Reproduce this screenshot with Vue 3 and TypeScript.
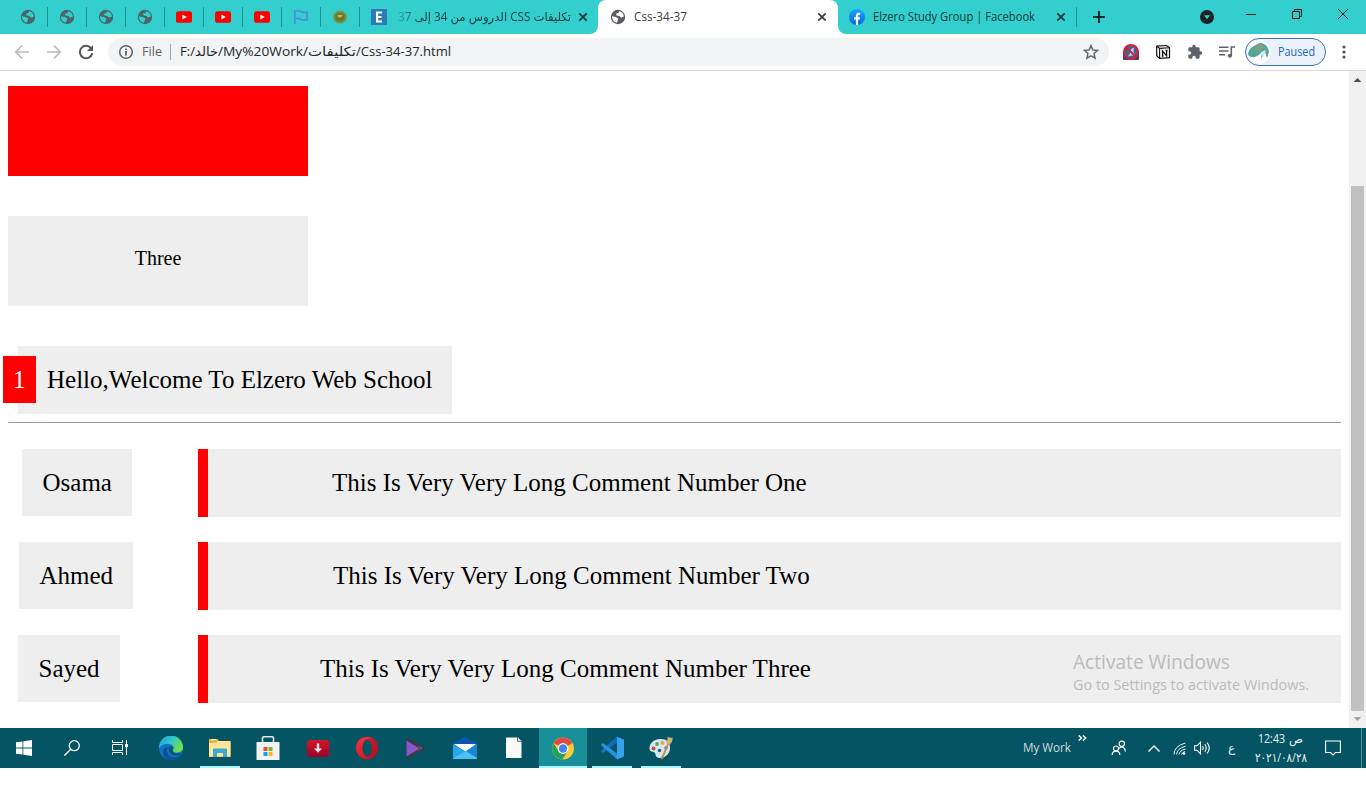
<script setup lang="ts">
import { h } from 'vue'

interface LabelProps {
  text: string
  width: number
  size: number
  rtl?: boolean
  override?: boolean
}

// Interface label stretched to an exact width
const Label = (p: LabelProps) => {
  const height = Math.ceil(p.size * 1.5)
  return h('svg', { width: p.width, height, class: 'label' }, [
    h(
      'text',
      {
        x: p.rtl ? p.width : 0,
        y: Math.round(p.size * 1.1),
        'font-size': p.size,
        textLength: p.width,
        lengthAdjust: 'spacingAndGlyphs',
        direction: p.rtl ? 'rtl' : 'ltr',
        style: p.override ? 'unicode-bidi: bidi-override' : undefined,
        fill: 'currentColor',
      },
      p.text,
    ),
  ])
}
Label.props = { text: String, width: Number, size: Number, rtl: Boolean, override: Boolean }

const pinned: string[] = ['globe', 'globe', 'globe', 'globe', 'yt', 'yt', 'yt', 'flag', 'moss']

const urlParts = [
  { text: 'F:/', width: 15, size: 12.7, rtl: false },
  { text: 'خالد', width: 23, size: 12.7, rtl: true },
  { text: '/My%20Work/', width: 90, size: 12.7, rtl: false },
  { text: 'تكليفات', width: 48, size: 12.7, rtl: true },
  { text: '/Css-34-37.html', width: 95, size: 12.7, rtl: false },
]

const comments = [
  { name: 'Osama', text: 'This Is Very Very Long Comment Number One', key: 'one' },
  { name: 'Ahmed', text: 'This Is Very Very Long Comment Number Two', key: 'two' },
  { name: 'Sayed', text: 'This Is Very Very Long Comment Number Three', key: 'three' },
]

const apps = [
  { id: 'edge', state: '' },
  { id: 'files', state: 'open' },
  { id: 'store', state: '' },
  { id: 'down', state: '' },
  { id: 'opera', state: '' },
  { id: 'player', state: '' },
  { id: 'mail', state: '' },
  { id: 'doc', state: '' },
  { id: 'chrome', state: 'active' },
  { id: 'code', state: 'open' },
  { id: 'paint', state: 'open' },
]
</script>

<template>
  <div class="screen">
    <svg width="0" height="0" class="defs">
      <defs>
        <symbol id="globe" viewBox="0 0 16 16">
          <circle cx="8" cy="8" r="7.2" fill="currentColor" />
          <path d="M9.2 2.2 L8.4 4 L6.2 4.6 L6.4 6.4 L9.6 6.9 L11 8.8 L13.9 7.6 A6 6 0 0 0 9.2 2.2Z M2 7.2 L5.6 8 L8.3 9.2 L7.9 11 L6.9 13.8 A6 6 0 0 1 2 7.2Z" fill="var(--hole)" />
        </symbol>
        <symbol id="close" viewBox="0 0 10 10">
          <path d="M1.3 1.3L8.7 8.7M8.7 1.3L1.3 8.7" stroke="currentColor" stroke-width="1.8" />
        </symbol>
        <linearGradient id="gEdge" x1="0" y1="0" x2="1" y2="0.5">
          <stop offset="0" stop-color="#1c9fe2" /><stop offset=".55" stop-color="#35c4c9" /><stop offset="1" stop-color="#6fe04b" />
        </linearGradient>
        <linearGradient id="gOpera" x1="0" y1="0" x2="1" y2="1">
          <stop offset="0" stop-color="#ff3440" /><stop offset="1" stop-color="#b80a1c" />
        </linearGradient>
        <linearGradient id="gRed" x1="0" y1="0" x2="0" y2="1">
          <stop offset="0" stop-color="#d31627" /><stop offset="1" stop-color="#97062b" />
        </linearGradient>
        <linearGradient id="gFb" x1="0" y1="0" x2="0" y2="1">
          <stop offset="0" stop-color="#19a8fb" /><stop offset="1" stop-color="#0866e4" />
        </linearGradient>
        <radialGradient id="gMoss">
          <stop offset="0" stop-color="#a8a23a" /><stop offset=".5" stop-color="#6a7a28" /><stop offset=".8" stop-color="#6b9a52" /><stop offset="1" stop-color="#6b9a52" stop-opacity="0.1" />
        </radialGradient>
      </defs>
    </svg>

    <header class="tabs">
      <div v-for="(p, i) in pinned" :key="i" class="pin">
        <svg v-if="p === 'globe'" width="16" height="16" class="dim"><use href="#globe" /></svg>
        <svg v-else-if="p === 'yt'" width="16" height="16" viewBox="0 0 16 16">
          <rect y="2.3" width="16" height="11.5" rx="2.6" fill="#f00" /><path d="M6.4 5.6L10.8 8L6.4 10.4Z" fill="#fff" />
        </svg>
        <svg v-else-if="p === 'flag'" width="16" height="16" viewBox="0 0 16 16" fill="none" stroke="#4a8fd6" stroke-width="1.7">
          <path d="M1.8 15V2H7.2L9 3.3H14V10.8H8.8L7 9.7H2" />
        </svg>
        <svg v-else width="16" height="16" viewBox="0 0 16 16">
          <ellipse cx="8" cy="8" rx="7.8" ry="7" fill="url(#gMoss)" />
          <path d="M3.5 6.2Q8 3 12.500 6.2L10.5 10.5Q8 13 5.5 10.5Z" fill="#6b7522" /><path d="M5 6.5Q8 5 11 6.5L9 8.5H6.5Z" fill="#c0b463" />
        </svg>
      </div>

      <div class="tab first">
        <svg width="16" height="16" viewBox="0 0 16 16"><rect width="16" height="16" fill="#2c7bb8" /><path d="M5 2.500H11V4.500H7.2V6.9H10.5V8.9H7.2V11.500H11V13.500H5Z" fill="#fff" /></svg>
        <Label class="fade" text="تكليفات CSS الدروس من 34 إلى 37" :width="173" :size="12" rtl />
        <svg width="10" height="10"><use href="#close" /></svg>
      </div>
      <div class="tab current">
        <svg width="16" height="16" class="grey"><use href="#globe" /></svg>
        <Label text="Css-34-37" :width="53" :size="12" />
        <svg width="10" height="10" class="end"><use href="#close" /></svg>
      </div>
      <div class="tab last">
        <svg width="16" height="16" viewBox="0 0 16 16">
          <circle cx="8" cy="8" r="8" fill="url(#gFb)" /><path d="M6.9 16V10.4H5V8.2H6.9V6.5Q6.9 3.8 9.6 3.8L11.2 3.9V5.8H10.1Q9.1 5.8 9.1 6.8V8.2H11.1L10.7 10.4H9.1V16Z" fill="#fff" />
        </svg>
        <Label text="Elzero Study Group | Facebook" :width="162" :size="12" />
        <svg width="10" height="10" class="end"><use href="#close" /></svg>
        <i class="divider"></i>
      </div>
      <svg class="plus" width="12" height="12" viewBox="0 0 12 12"><path d="M6 0V12M0 6H12" stroke="#14282b" stroke-width="2" /></svg>
      <div class="winctl">
        <svg width="14" height="14" viewBox="0 0 14 14" class="drop"><circle cx="7" cy="7" r="7" fill="#1f2124" /><path d="M4 5.3H10L7 9.3Z" fill="#33cfcf" /></svg>
        <svg width="10" height="10" viewBox="0 0 10 10"><path d="M0 5.5H10" stroke="#0b1a1a" /></svg>
        <svg width="10" height="10" viewBox="0 0 10 10" fill="none" stroke="#0b1a1a"><path d="M.5 2.5H7.5V9.5H.5ZM2.5 2.5V.5H9.5V7.5H7.5" /></svg>
        <svg width="10" height="10" viewBox="0 0 10 10"><path d="M0 0L10 10M10 0L0 10" stroke="#0b1a1a" /></svg>
      </div>
    </header>

    <nav class="toolbar">
      <svg class="nav" width="16" height="16" viewBox="0 0 16 16" fill="none" stroke="#babcbe" stroke-width="1.7"><path d="M15 8H2M8 1.7L1.7 8L8 14.3" /></svg>
      <svg class="nav" width="16" height="16" viewBox="0 0 16 16" fill="none" stroke="#babcbe" stroke-width="1.7"><path d="M1 8H14M8 1.7L14.3 8L8 14.3" /></svg>
      <svg class="nav" width="16" height="16" viewBox="0 0 16 16"><path d="M13.3 4.6A6.2 6.2 0 1 0 14.2 9.2" fill="none" stroke="#54575b" stroke-width="2" /><path d="M15 1V7H9Z" fill="#54575b" /></svg>
      <div class="omni">
        <svg width="16" height="16" viewBox="0 0 16 16"><circle cx="8" cy="8" r="6.3" fill="none" stroke="#5f6368" stroke-width="1.5" /><path d="M7.2 7H8.8V11.5H7.2ZM7.2 4.4H8.8V6H7.2Z" fill="#4f5357" /></svg>
        <Label class="scheme" text="File" :width="20" :size="12.7" />
        <i class="bar"></i>
        <div class="url"><Label v-for="part in urlParts" :key="part.text" v-bind="part" /></div>
        <svg class="star" width="16" height="16" viewBox="0 0 16 16" fill="none" stroke="#5f6368" stroke-width="1.4"><path d="M8 1.6L9.9 6L14.6 6.4L11 9.5L12.1 14.2L8 11.7L3.9 14.2L5 9.5L1.4 6.4L6.1 6Z" /></svg>
      </div>
      <svg class="ext" width="16" height="16" viewBox="0 0 16 16"><path d="M0 8H16V15Q16 16 15 16H1Q0 16 0 15Z" fill="#3a4672" /><circle cx="8" cy="8" r="7" fill="#41639b" stroke="#d3212f" stroke-width="2" /><path d="M8 5L11 3.5L10.500 8L12 11L5 12.500L7 9.500Z" fill="#b9cbe6" /><path d="M3 3L13 13" stroke="#d3212f" stroke-width="2" /></svg>
      <svg class="ext" width="16" height="16" viewBox="0 0 16 16"><path d="M1.7 2.200L11.6 1.500L14.500 3.600V13.700L4.600 14.400L1.700 11.800Z" fill="#fff" stroke="#111" stroke-width="1.200" /><path d="M1.900 2.300L4.600 4.400L14.500 3.700M4.600 4.400V14.400" stroke="#111" stroke-width="1.100" fill="none" /><path d="M7.600 12.200V7L11.600 11.800V6.500M6.700 6.900H8.200M10.600 6.400H12.600M6.700 12.200H8.500" stroke="#111" stroke-width="1.300" fill="none" /></svg>
      <svg class="ext" width="16" height="16" viewBox="0 0 24 24"><path fill="#5f6368" d="M20.5 11H19V7c0-1.1-.9-2-2-2h-4V3.500a2.500 2.500 0 0 0-5 0V5H4c-1.100 0-2 .9-2 2v3.800h1.500a2.700 2.700 0 0 1 0 5.400H2V20c0 1.100.9 2 2 2h3.800v-1.500a2.700 2.700 0 0 1 5.400 0V22H17c1.100 0 2-.9 2-2v-4h1.500a2.500 2.500 0 0 0 0-5z" /></svg>
      <svg class="ext" width="16" height="16" viewBox="0 0 16 16" fill="none" stroke="#5f6368" stroke-width="1.6"><path d="M0 3.300H9.500M0 7H9.500M0 10.700H6M12.300 12V3H16" /><circle cx="10.900" cy="11.800" r="2" fill="#5f6368" stroke="none" /></svg>
      <div class="profile">
        <svg width="24" height="24" viewBox="0 0 24 24"><circle cx="12" cy="12" r="11.500" fill="#fff" /><path d="M1 13Q3 7 9 5Q13 1.500 17 4Q21 6 22 12L20 18L18 12L14 19L15 12Q10 18 5 17Q1 17 1 13Z" fill="#57a596" /><path d="M8 6Q14 3 18 6L13 11L8 10Z" fill="#7f9e82" /><path d="M14 12L19 10L16 18Z" fill="#d5e8e5" /></svg>
        <Label text="Paused" :width="37" :size="12.300" />
      </div>
      <svg class="dots" width="4" height="14" viewBox="0 0 4 14" fill="#505357"><circle cx="2" cy="2" r="1.600" /><circle cx="2" cy="7" r="1.600" /><circle cx="2" cy="12" r="1.600" /></svg>
    </nav>

    <div class="viewport">
      <main class="page">
        <div class="box red"></div>
        <div class="box">Three</div>
        <div class="hello"><span class="badge">1</span>Hello,Welcome To Elzero Web School</div>
        <div class="rule"></div>
        <div v-for="c in comments" :key="c.key" class="row" :class="c.key">
          <div class="who"><span class="name">{{ c.name }}</span></div>
          <p class="comment">{{ c.text }}</p>
        </div>
      </main>
      <aside class="scroll">
        <svg width="17" height="17"><path d="M4.500 11L8.500 7L12.500 11Z" fill="#505050" /></svg>
        <div class="thumb"></div>
        <svg width="17" height="17"><path d="M4.500 6L8.500 10L12.500 6Z" fill="#a3a3a3" /></svg>
      </aside>
      <div class="watermark">
        <Label text="Activate Windows" :width="157" :size="19.500" />
        <Label text="Go to Settings to activate Windows." :width="236" :size="14.800" />
      </div>
    </div>

    <footer class="taskbar">
      <div class="sys"><svg width="16" height="16" viewBox="0 0 16 16" fill="#fff"><path d="M0 2.300L6.500 1.400V7.500H0ZM7.300 1.300L16 0V7.500H7.300ZM0 8.400H6.500V14.600L0 13.700ZM7.300 8.400H16V16L7.300 14.700Z" /></svg></div>
      <div class="sys"><svg width="16" height="16" viewBox="0 0 16 16" fill="none" stroke="#fff" stroke-width="1.300"><circle cx="10.300" cy="5.700" r="5" /><path d="M6.700 9.300L.4 15.600" /></svg></div>
      <div class="sys"><svg width="16" height="16" viewBox="0 0 16 16" fill="none" stroke="#fff"><path d="M.5 0V2.500H10.500V0M.5 15V12.500H10.500V15M.5 4.500H10.500V10.500H.5ZM14.500 0V15" /><path d="M13 4H16V7H13Z" fill="#fff" stroke="none" /></svg></div>
      <div class="apps">
        <div v-for="a in apps" :key="a.id" class="app" :class="[a.state, a.id]">
          <svg width="24" height="24" viewBox="0 0 24 24">
            <g v-if="a.id === 'edge'">
              <circle cx="12" cy="12" r="12" fill="#1272c8" />
              <path d="M0 12A12 12 0 0 1 24 11Q24.500 16 18 16.500Q13.500 16.500 14 14Q15.500 12 14 10Q11 7 6 8Q2 9 0 12Z" fill="url(#gEdge)" />
              <path d="M8.500 11Q6.500 19 14 21.500Q19 22 22.500 17.500Q20 24 12 24Q3.500 23 4 15Q4.500 11.500 8.500 11Z" fill="#0d4f98" />
              <path d="M9.500 11.500Q12 9 14 11.500Q14 13.500 13.500 15Q14.500 17.500 19 17.500L22.500 16.500Q20 20 16 20Q10 19 9.500 11.500Z" fill="#075a70" />
            </g>
            <g v-else-if="a.id === 'files'">
              <path d="M1 3H9.500L11 5H22.500V21H1Z" fill="#e9b83c" /><path d="M1 7H8L10 5H22.500V20.500H1Z" fill="#ffe598" /><path d="M3.500 3H8V4H3.500Z" fill="#fff" /><path d="M5 21V13.500Q5 12.500 6 12.500H18Q19 12.500 19 13.500V21H15V17H9V21Z" fill="#39a8d8" />
            </g>
            <g v-else-if="a.id === 'store'">
              <path d="M6.500 7V2Q6.500 .8 7.700 .8H16.300Q17.500 .8 17.500 2V7" fill="none" stroke="#e4e7e9" stroke-width="1.600" /><path d="M.5 6H23.500V24H.5Z" fill="#f1f2f3" /><path d="M7.500 11H11.500V15H7.500Z" fill="#e8502b" /><path d="M12.500 11H16.500V15H12.500Z" fill="#7cb62f" /><path d="M7.500 16H11.500V20H7.500Z" fill="#13a3e4" /><path d="M12.500 16H16.500V20H12.500Z" fill="#f7b71d" />
            </g>
            <g v-else-if="a.id === 'down'">
              <rect x=".8" y="4" width="22.500" height="17" rx="3.500" fill="url(#gRed)" /><path d="M10.800 7.500H13.200V12.500H16L12 16.800L8 12.500H10.800Z" fill="#f1dfe0" />
            </g>
            <g v-else-if="a.id === 'opera'">
              <path fill-rule="evenodd" d="M12 .8A11 11.300 0 1 0 12 23.400A11 11.300 0 1 0 12 .8ZM12.300 3.700C15 3.700 17 7.500 17 12.100S15 20.500 12.300 20.500S7.500 16.700 7.500 12.100S9.600 3.700 12.300 3.700Z" fill="url(#gOpera)" /><path d="M12 3.500Q15.500 1 19 3.800Q23 7 23 12T19 20.400Q15.500 23 12 20.700Q17 19.500 17 12T12 3.500Z" fill="#a70d1b" opacity=".4" />
            </g>
            <g v-else-if="a.id === 'player'">
              <path d="M2.500 1.800Q3 1.300 4 2L21 11.500Q22 12.200 21 13L4 22.500Q2.500 23 2.500 21.500Z" fill="#373b44" /><path d="M2.500 4.500L15.500 12.500L2.500 20.500Z" fill="#8955c9" /><path d="M13 9L19 12L13 16L16 12.500Z" fill="#635a60" />
            </g>
            <g v-else-if="a.id === 'mail'">
              <path d="M0 7.500L10.500 1.200Q12 .4 13.500 1.200L24 7.500V15H0Z" fill="#0758ac" /><path d="M1 8H23L12.500 16Z" fill="#fff" /><path d="M0 8L12.500 15.500L24 22V23H0Z" fill="#28a7e8" /><path d="M24 8L12.500 15.500L0 22V23H24Z" fill="#4cc1f4" /><path d="M24 8L13 15.200L24 22Z" fill="#1687d3" />
            </g>
            <g v-else-if="a.id === 'doc'">
              <path d="M4 1.500H16L19.500 5V22H4Z" fill="#fafafa" /><path d="M15.500 1.200V5.300H19.600" fill="none" stroke="#5b6b70" />
            </g>
            <g v-else-if="a.id === 'chrome'">
              <circle cx="12" cy="12.500" r="11" fill="#fcc932" /><path d="M12 12.500L2.500 7A11 11 0 0 1 21.500 7Z" fill="#df4b3e" /><path d="M2.500 7A11 11 0 0 0 11.500 23.500L16.500 15.200L12 12.500L7.500 15Z" fill="#24a15b" /><circle cx="12" cy="12.500" r="5.400" fill="#fff" /><circle cx="12" cy="12.500" r="4.200" fill="#4184f3" />
            </g>
            <g v-else-if="a.id === 'code'">
              <path d="M17 .8L1 15L3 17L17.500 6Z" fill="#1779c6" /><path d="M17 23.300L.8 9L3 7L17.500 18Z" fill="#2593df" /><path d="M17 .8L24 3.500V20.500L17 23.500Z" fill="#35a3ec" /><path d="M17 .8V6L10 11.500L7.500 9.300Z" fill="#0d6cb8" />
            </g>
            <g v-else>
              <path d="M11 3C4 3.500 0 8 .5 13C1 16 4 15.500 5.500 16.500S6 22 10.500 22C17 22 21.500 17 21 11C20.500 6 17 2.500 11 3Z" fill="#d5e7f3" /><circle cx="4.500" cy="12.500" r="1.900" fill="#d94436" /><circle cx="8" cy="8" r="1.900" fill="#51a956" /><circle cx="13.500" cy="7" r="2" fill="#f0a51c" /><circle cx="10.500" cy="14.500" r="1.800" fill="#285d80" /><circle cx="17" cy="12" r="1.800" fill="#4387ca" /><path d="M18.500 7L20 8L13.500 23.500L11.800 23Z" fill="#c88836" /><path d="M17 6Q19 4.500 18.500 .5Q21 2.500 23.500 1.500Q24 6 20 9Z" fill="#d6b176" />
            </g>
          </svg>
        </div>
      </div>
      <div class="tray">
        <Label class="work" text="My Work" :width="48" :size="12" />
        <svg class="more" width="9" height="6" viewBox="0 0 9 6" fill="none" stroke="#fff" stroke-width="1.400"><path d="M.7 .4L3.500 3L.7 5.600M5 .4L7.800 3L5 5.600" /></svg>
        <svg class="people" width="15" height="16" viewBox="0 0 15 16" fill="none" stroke="#fff" stroke-width="1.200"><circle cx="10.800" cy="3.800" r="2.700" /><circle cx="5" cy="8.500" r="2.500" /><path d="M1.200 15Q1.200 11.100 5 11.100T8.800 15M8 8.500Q10 6.500 12.500 7.500Q14.300 8.700 14.400 11.500" /></svg>
        <svg class="chev" width="12" height="7" viewBox="0 0 12 7" fill="none" stroke="#fff" stroke-width="1.300"><path d="M.5 6.500L6 1L11.500 6.500" /></svg>
        <svg class="wifi" width="13" height="13" viewBox="0 0 13 13" fill="none" stroke="#e8f3f4"><path d="M1 12.500Q1 4 12.500 1M3.500 12.500Q4 6.500 12.500 4.200M6 12.500Q6.500 8.500 12.500 7M8.500 12.500Q9 10.500 12 9.500" /><circle cx="11" cy="11.500" r="1.300" fill="#fff" stroke="none" /></svg>
        <svg class="vol" width="17" height="14" viewBox="0 0 17 14" fill="none" stroke="#fff" stroke-width="1.100"><path d="M.6 4.800H3L6.500 1.200V12.800L3 9.200H.6ZM8.500 5Q10 7 8.500 9M10.800 3.200Q13.600 7 10.800 10.800M13 1.500Q17.500 7 13 12.500" /></svg>
        <span class="lang">ع</span>
        <div class="clock">
          <div class="time"><Label text="12:43" :width="27" :size="12" /><Label text="ص" :width="14" :size="12" rtl /></div>
          <Label text="٢٠٢١/٠٨/٢٨" :width="52" :size="12.500" override />
        </div>
        <svg class="note" width="16" height="16" viewBox="0 0 16 16" fill="none" stroke="#fff" stroke-width="1.100"><path d="M.6 1H15.400V12.500H10.500L8 15L5.500 12.500H.6Z" /></svg>
        <i class="peek"></i>
      </div>
    </footer>
  </div>
</template>

<style>
body {
  margin: 0;
  overflow: hidden;
  background: #fff;
}
</style>

<style scoped>
.screen {
  width: 1366px;
  height: 798px;
  display: flex;
  flex-direction: column;
  overflow: hidden;
  font-family: 'Open Sans', 'DejaVu Sans', sans-serif;
}
.screen svg {
  display: block;
  flex: none;
}
.defs {
  position: absolute;
}
.label {
  overflow: visible;
}
.tabs {
  height: 34px;
  flex: none;
  display: flex;
  align-items: center;
  background: #33cfcf;
  padding-left: 9px;
  color: #14393d;
}
.pin {
  box-sizing: border-box;
  width: 39px;
  height: 20px;
  display: flex;
  align-items: center;
  justify-content: center;
  border-right: 1px solid #1f8f92;
}
.dim {
  color: #4b6569;
  --hole: #33cfcf;
}
.grey {
  color: #5a5d61;
  --hole: #fff;
}
.tab {
  box-sizing: border-box;
  height: 34px;
  display: flex;
  align-items: center;
}
.first {
  width: 238px;
  padding: 0 10px 0 11px;
  justify-content: space-between;
  background: #33cfcf;
  border-bottom-right-radius: 8px;
}
.fade {
  margin-left: 4px;
  -webkit-mask-image: linear-gradient(to right, rgba(0, 0, 0, 0.25), #000 24px);
  mask-image: linear-gradient(to right, rgba(0, 0, 0, 0.25), #000 24px);
}
.current {
  width: 240px;
  padding: 0 11px 0 12px;
  gap: 8px;
  background: #fff;
  color: #3c4043;
  border-radius: 8px 8px 0 0;
  box-shadow: -9px 9px 0 0 #fff, 9px 9px 0 0 #fff;
}
.first,
.last {
  z-index: 1;
}
.last {
  width: 239px;
  padding: 0 0 0 11px;
  gap: 8px;
  background: #33cfcf;
  border-bottom-left-radius: 8px;
}
.divider {
  width: 1px;
  height: 20px;
  margin-left: 2px;
  background: #1f8f92;
}
.end {
  margin-left: auto;
}
.plus {
  margin-left: 16px;
}
.winctl {
  align-self: flex-start;
  margin-left: auto;
  padding-right: 18px;
  display: flex;
  align-items: center;
  gap: 36px;
  height: 28px;
}
.drop {
  margin-top: 6px;
  margin-right: -4px;
}
.toolbar {
  box-sizing: border-box;
  height: 37px;
  flex: none;
  display: flex;
  align-items: center;
  padding: 0 20px 1px 14px;
  background: #fff;
  border-bottom: 1px solid #d9dadc;
  z-index: 2;
}
.nav {
  margin-right: 16px;
}
.omni {
  box-sizing: border-box;
  width: 1001px;
  height: 28px;
  margin-left: -2px;
  border-radius: 14px;
  background: #f1f3f4;
  display: flex;
  align-items: center;
  padding: 0 10px;
  color: #24272b;
}
.scheme {
  margin-left: 8px;
  color: #5f6368;
}
.bar {
  width: 1px;
  height: 16px;
  margin: 0 9px 0 8px;
  background: #9fa3a7;
}
.url {
  display: flex;
}
.star {
  margin-left: auto;
}
.ext {
  margin-left: 14px;
  margin-right: 2px;
}
.profile {
  box-sizing: border-box;
  width: 81px;
  height: 28px;
  margin-left: 8px;
  border: 1px solid #3b72c4;
  border-radius: 14px;
  background: #ebf1fb;
  color: #2864c0;
  display: flex;
  align-items: center;
  padding: 0 0 0 1px;
  gap: 7px;
}
.dots {
  margin-left: auto;
}
.viewport {
  position: relative;
  height: 657px;
  flex: none;
  display: flex;
}
.page {
  box-sizing: border-box;
  width: 1349px;
  padding: 15px 8px 0;
  font: 25px/28px 'Liberation Serif', 'Times New Roman', serif;
  color: #000;
}
.box {
  box-sizing: border-box;
  width: 300px;
  height: 90px;
  margin-bottom: 40px;
  padding: 30px;
  background: #eee;
  font-size: 20px;
  line-height: 24px;
  text-align: center;
}
.red {
  background: #f00;
}
.hello {
  box-sizing: border-box;
  position: relative;
  width: 434px;
  height: 68px;
  margin-left: 10px;
  padding: 20px 0 20px 29px;
  background: #eee;
  white-space: nowrap;
}
.badge {
  box-sizing: border-box;
  position: absolute;
  left: -15px;
  top: 10px;
  width: 33px;
  height: 47px;
  padding: 10px 0 0 10px;
  background: #f00;
  color: #fff;
}
.rule {
  width: 1333px;
  height: 1px;
  margin: 8px 0 26px;
  background: #9a9a9a;
}
.row {
  display: flex;
  width: 1333px;
  height: 68px;
  margin-bottom: 25px;
}
.who {
  width: 190px;
  flex: none;
}
.name {
  box-sizing: border-box;
  display: block;
  height: 67px;
  padding: 20px 0 0 20.5px;
  background: #eee;
}
.one .name {
  width: 110px;
  margin-left: 14px;
}
.two .name {
  width: 114px;
  margin-left: 11px;
}
.three .name {
  width: 102px;
  margin-left: 10px;
}
.comment {
  box-sizing: border-box;
  flex: 1;
  margin: 0;
  padding: 20px 0 0 124px;
  border-left: 10px solid #f00;
  background: #eee;
  white-space: nowrap;
}
.two .comment {
  padding-left: 125px;
}
.three .comment {
  padding-left: 112px;
}
.scroll {
  width: 17px;
  background: #f1f1f1;
  display: flex;
  flex-direction: column;
  justify-content: space-between;
}
.thumb {
  width: 13px;
  height: 525px;
  margin: auto 2px 0;
  background: #c1c1c1;
}
.watermark {
  position: absolute;
  left: 1073px;
  top: 577px;
  color: #bbb;
  display: flex;
  flex-direction: column;
  gap: -4px;
}
.watermark .label + .label {
  margin-top: -4px;
}
.taskbar {
  height: 40px;
  flex: none;
  display: flex;
  background: #045463;
  color: #e9f2f3;
}
.sys {
  width: 48px;
  display: flex;
  align-items: center;
  justify-content: center;
}
.apps {
  display: flex;
  margin-left: 2px;
}
.app {
  box-sizing: border-box;
  width: 49px;
  height: 40px;
  display: flex;
  align-items: center;
  justify-content: center;
}
.store {
  padding-right: 2px;
}
.open {
  background: linear-gradient(#a5f7fc, #a5f7fc) 5px 38px / 40px 2px no-repeat;
}
.active {
  width: 48px;
  margin-left: 1px;
  background: linear-gradient(#a5f7fc, #a5f7fc) 0 38px / 48px 2px no-repeat #188f98;
}
.tray {
  flex: 1;
  display: flex;
  align-items: center;
}
.work {
  margin-left: 338px;
  color: #cfdcde;
}
.more {
  margin: 0 0 20px 7px;
}
.people {
  margin-left: 24px;
}
.chev {
  margin-left: 22px;
}
.wifi {
  margin-left: 13px;
}
.vol {
  margin-left: 8px;
}
.lang {
  width: 8px;
  margin-left: 17px;
  font-size: 12px;
  line-height: 16px;
}
.clock {
  width: 52px;
  margin-left: 19px;
}
.time {
  display: flex;
  gap: 4px;
  margin-left: 3px;
}
.note {
  margin-left: 18px;
}
.peek {
  width: 1px;
  height: 40px;
  margin-left: 20px;
  background: #5b9099;
}
</style>
